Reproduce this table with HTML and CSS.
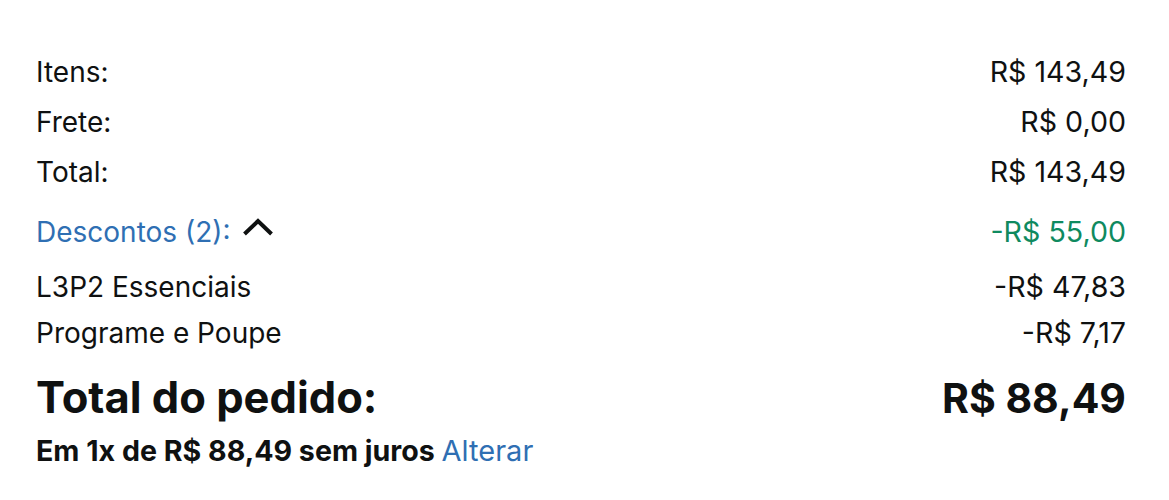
FILE: index.html
```html
<!DOCTYPE html>
<html lang="pt-BR">
<head>
<meta charset="utf-8">
<link rel="stylesheet" href="styles.css">
</head>
<body>
<div class="summary">
  <div class="row"><span>Itens:</span><span class="amt">R$ 143,49</span></div>
  <div class="row"><span>Frete:</span><span class="amt">R$ 0,00</span></div>
  <div class="row"><span>Total:</span><span class="amt">R$ 143,49</span></div>
  <div class="row discounts">
    <span class="disc-label"><span class="link">Descontos (2):</span>
      <svg class="chev" width="32" height="20" viewBox="0 0 32 20"><path d="M2.5 17 L16 4 L29.5 17" fill="none" stroke="#0f1111" stroke-width="4"/></svg>
    </span>
    <span class="amt green">-R$ 55,00</span>
  </div>
  <div class="row sub first"><span>L3P2 Essenciais</span><span class="amt">-R$ 47,83</span></div>
  <div class="row sub"><span>Programe e Poupe</span><span class="amt">-R$ 7,17</span></div>
  <div class="row grand"><span>Total do pedido:</span><span class="grand-amt">R$ 88,49</span></div>
  <div class="installments">Em 1x de R$ 88,49 sem juros <span class="link">Alterar</span></div>
</div>
</body>
</html>
```

FILE: styles.css
```css
html, body {
  margin: 0;
  padding: 0;
  background: #ffffff;
}
body {
  font-family: "Inter", "Open Sans", sans-serif;
  color: #0f1111;
}
.summary {
  padding: 47px 43px 0 36px;
}
.row {
  display: flex;
  justify-content: space-between;
  align-items: baseline;
  font-size: 28px;
  line-height: 50px;
}
.amt {
  font-size: 28.6px;
}
.discounts {
  margin-top: 10px;
}
.disc-label {
  display: flex;
  align-items: center;
  gap: 11px;
}
.chev {
  position: relative;
  top: -5px;
}
.link {
  color: #2f6fb3;
}
.green {
  color: #0f8a5f;
}
.sub {
  line-height: 46px;
}
.sub.first {
  margin-top: 7px;
}
.grand {
  font-size: 43.5px;
  font-weight: 700;
  margin-top: 16px;
}
.grand-amt {
  font-size: 41px;
}
.installments {
  font-size: 28.6px;
  font-weight: 700;
  line-height: 34px;
  margin-top: 11px;
}
.installments .link {
  font-weight: 400;
  font-size: 29px;
}
```
